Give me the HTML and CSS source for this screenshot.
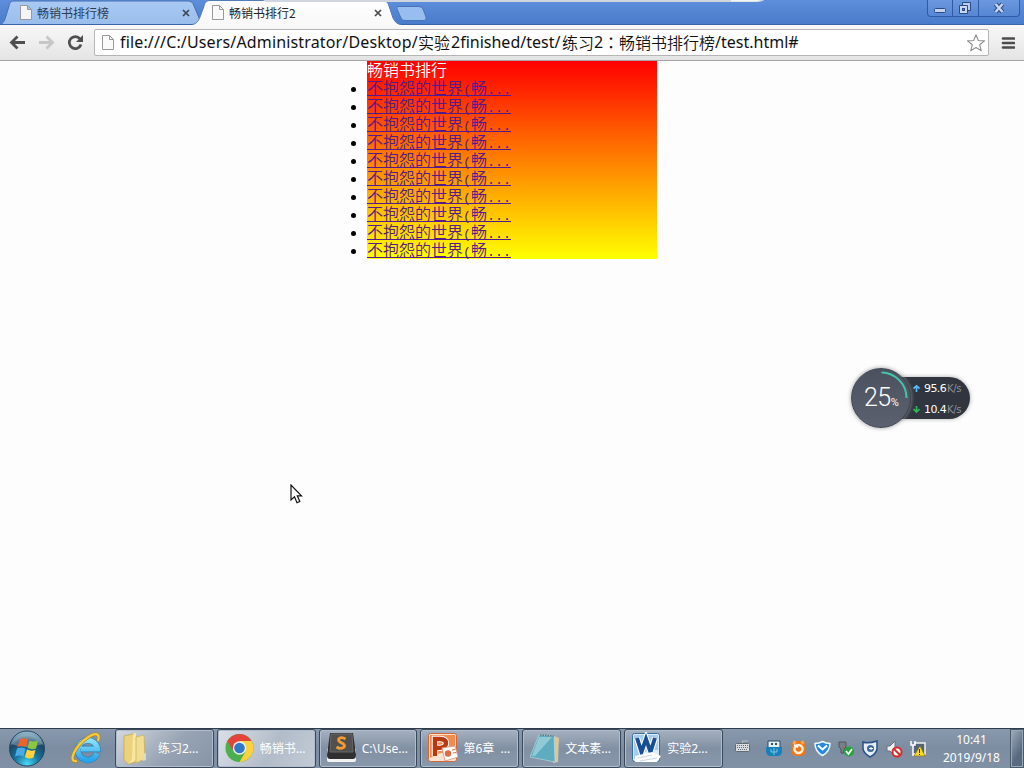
FILE: index.html
```html
<!DOCTYPE html>
<html lang="zh-CN">
<head>
<meta charset="utf-8">
<title>畅销书排行2</title>
<link rel="stylesheet" href="styles.css">
</head>
<body>
<div class="screen">
  <header class="tabstrip">
    <svg class="tab-shapes" width="1024" height="25" viewBox="0 0 1024 25">
      <defs>
        <linearGradient id="gTab" x2="0" y2="1"><stop offset="0" stop-color="#a9c9f3"/><stop offset="1" stop-color="#99bdec"/></linearGradient>
        <linearGradient id="gActive" x2="0" y2="1"><stop offset="0" stop-color="#fff"/><stop offset="1" stop-color="#f8f8f8"/></linearGradient>
      </defs>
      <path d="M-4 25C3 25 4 22 6 16L9 6C10 2 11 1 15 1H187C192 1 193 3 194 6L202 25Z" fill="url(#gTab)" stroke="#4671b3"/>
      <path d="M0 24.5H1024" stroke="#3c64a4"/>
      <path d="M192 25C196 24 198 22 200 17L204 6C205 2 207 .5 210 .5H382C387 .5 388 3 389 6L393 18C395 22 397 24 401 25Z" fill="url(#gActive)"/>
      <path d="M192 24.500C196 24 198 22 200 17L204 6C205 2 207 .5 210 .5H382C387 .5 388 3 389 6L393 18C395 22 397 24 401 24.500" fill="none" stroke="#527bb8"/>
      <path d="M398 6.500H419Q422 6.500 423 9L426 17Q427 20.500 424 20.500H405Q402 20.500 401 18L397 9Q396 6.500 398 6.500Z" fill="#98bef0" stroke="#4773b8"/>
      <path d="M263 0H764Q762 2 756 2H266Z" fill="#cfd6de"/><path d="M731 0H761L756 1.500H731Z" fill="#f3f6f4"/>
    </svg>
    <div class="tab tab-first">
      <svg width="12" height="15" viewBox="0 0 12 15"><path d="M.5.5H7.500L11.500 4.500V14.500H.5ZM7.500.5V4.500H11.500" fill="#f5f5f5" stroke="#999"/></svg>
      <span class="tab-title">畅销书排行榜</span>
      <svg class="tab-close" width="8" height="8" viewBox="0 0 8 8"><path d="M1 1L7 7M7 1L1 7" stroke="#3f4650" stroke-width="1.700"/></svg>
    </div>
    <div class="tab tab-second">
      <svg width="12" height="15" viewBox="0 0 12 15"><path d="M.5.5H7.500L11.500 4.500V14.500H.5ZM7.500.5V4.500H11.500" fill="#fafafa" stroke="#999"/></svg>
      <span class="tab-title">畅销书排行2</span>
      <svg class="tab-close" width="8" height="8" viewBox="0 0 8 8"><path d="M1 1L7 7M7 1L1 7" stroke="#4a4a4a" stroke-width="1.700"/></svg>
    </div>
    <div class="window-controls">
      <span class="wc"><svg width="24" height="16"><rect x="6.500" y="8.500" width="11" height="4" rx="1" fill="#c3d3ec" stroke="#2b4b86"/></svg></span>
      <span class="wc"><svg width="25" height="16"><path d="M9.500 2.500H17.500V10.500H9.500Z" fill="#b9cceb" stroke="#2b4b86"/><path d="M6.500 5.500H14.500V13.500H6.500Z" fill="#c9d8ef" stroke="#2b4b86"/><rect x="9.500" y="8.500" width="2" height="2" fill="#5c87cc" stroke="#2b4b86"/></svg></span>
      <span class="wc wc-close"><svg width="40" height="16"><path d="M16.500 4L23.500 12M23.500 4L16.500 12" stroke="#2b4b86" stroke-width="4.400"/><path d="M16.500 4L23.500 12M23.500 4L16.500 12" stroke="#c9d8ef" stroke-width="2.400"/></svg></span>
    </div>
  </header>

  <nav class="toolbar">
    <svg class="nav-icons" width="94" height="35" viewBox="0 0 94 35">
      <path d="M25 17.500H12M17.500 11.500L11.500 17.500L17.500 23.500" fill="none" stroke="#4f4f4f" stroke-width="2.800"/>
      <path d="M39 17.500H52M46.500 11.500L52.500 17.500L46.500 23.500" fill="none" stroke="#c7c7c7" stroke-width="2.800"/>
      <path d="M80 13.800A6 6 0 1 0 81 19.500" fill="none" stroke="#4f4f4f" stroke-width="2.700"/><path d="M83 10V17H76Z" fill="#4f4f4f"/>
    </svg>
    <div class="omnibox">
      <svg width="12" height="15" viewBox="0 0 12 15"><path d="M.5.5H7.500L11.500 4.500V14.500H.5ZM7.500.5V4.500H11.500" fill="#fafafa" stroke="#999"/></svg>
      <div class="url"><span class="url-drive">file:///C:/Users/Administrator/Desktop/</span><span class="url-cjk url-exp">实验</span><span class="url-folder">2finished/test/</span><span class="url-cjk">练习</span><span class="url-num">2</span><span class="url-colon">：</span><span class="url-cjk">畅销书排行榜</span><span class="url-file">/test.html#</span></div>
      <svg class="star" width="20" height="20" viewBox="0 0 20 20"><path d="M10 1.800L12.300 7.500L18.500 7.900L13.700 11.800L15.300 17.800L10 14.500L4.700 17.800L6.300 11.800L1.500 7.900L7.700 7.500Z" fill="#fff" stroke="#8f8f8f" stroke-width="1.100" stroke-linejoin="round"/></svg>
    </div>
    <svg class="menu" width="14" height="14" viewBox="0 0 14 14"><path d="M2 2.500H13M2 7H13M2 11.500H13" stroke="#4c4c4c" stroke-width="2.600" stroke-linecap="round"/></svg>
  </nav>

  <main class="page">
    <section class="books">
      <div class="books-title">畅销书排行</div>
      <ul class="book-list">
        <li><a href="#">不抱怨的世界<span class="mono">(</span>畅<span class="mono">...</span></a></li>
        <li><a href="#">不抱怨的世界<span class="mono">(</span>畅<span class="mono">...</span></a></li>
        <li><a href="#">不抱怨的世界<span class="mono">(</span>畅<span class="mono">...</span></a></li>
        <li><a href="#">不抱怨的世界<span class="mono">(</span>畅<span class="mono">...</span></a></li>
        <li><a href="#">不抱怨的世界<span class="mono">(</span>畅<span class="mono">...</span></a></li>
        <li><a href="#">不抱怨的世界<span class="mono">(</span>畅<span class="mono">...</span></a></li>
        <li><a href="#">不抱怨的世界<span class="mono">(</span>畅<span class="mono">...</span></a></li>
        <li><a href="#">不抱怨的世界<span class="mono">(</span>畅<span class="mono">...</span></a></li>
        <li><a href="#">不抱怨的世界<span class="mono">(</span>畅<span class="mono">...</span></a></li>
        <li><a href="#">不抱怨的世界<span class="mono">(</span>畅<span class="mono">...</span></a></li>
      </ul>
    </section>
  </main>

  <footer class="taskbar">
    <svg class="start" width="115" height="39" viewBox="0 0 115 39">
      <defs>
        <radialGradient id="orb" cx=".5" cy=".95" r=".9"><stop offset="0" stop-color="#48dcf5"/><stop offset=".4" stop-color="#17749f"/><stop offset=".75" stop-color="#1c4767"/><stop offset="1" stop-color="#8db5ca"/></radialGradient>
        <linearGradient id="ie" x2="0" y2="1"><stop offset="0" stop-color="#8be0fd"/><stop offset="1" stop-color="#2ba3e8"/></linearGradient>
      </defs>
      <circle cx="27" cy="19.500" r="17.500" fill="url(#orb)" stroke="#27465e"/>
      <path d="M11 15A17 15 0 0 1 43 15Q27 21 11 15Z" fill="#d3e5ef" opacity=".3"/>
      <path d="M20 10.500Q24 8 28 10.500L26 18.200Q22 16 17.500 18Z" fill="#ef632a"/>
      <path d="M29.500 11.500Q33.500 13.500 38 11.500L36 19.500Q31.500 21 27.500 19Z" fill="#8dc63f"/>
      <path d="M17 19.500Q21.500 17.500 25.500 19.800L23.500 27.500Q19.500 25.500 15 27.500Z" fill="#4aa9e9"/>
      <path d="M27 20.500Q31 22.500 35.500 21L33.500 28.500Q28.500 30.500 24.900 28Z" fill="#ffd13b"/>
      <path d="M97 24.500A9.800 9.800 0 1 1 97.500 20H81" fill="none" stroke="#297eb9" stroke-width="6.400"/>
      <path d="M97 24.500A9.800 9.800 0 1 1 97.500 20H81" fill="none" stroke="url(#ie)" stroke-width="5.200"/>
      <path d="M77 32C67 34 75 17 87 9C94 4 101 3 98 12" fill="none" stroke="#a98121" stroke-width="3.400"/><path d="M77 32C67 34 75 17 87 9C94 4 101 3 98 12" fill="none" stroke="#f6cb3a" stroke-width="2.300"/>
    </svg>
    <div class="tasks">
      <div class="task task-folder">
        <svg width="30" height="34" viewBox="0 0 30 34"><path d="M1 4L10 2L14 6V30L5 32L1 28Z" fill="#ecd27a" stroke="#c3a552" stroke-width=".7"/><path d="M10 2L13 1V28L5 32L9 27Z" fill="#f9e7a0"/><path d="M13 5L21 3L22 27L13 31Z" fill="#f2de92" stroke="#c9ac58" stroke-width=".7"/><path d="M20 22L23 21V28L20 29Z" fill="#d8dfbd"/></svg>
        <span>练习2...</span></div>
      <div class="task task-active">
        <svg width="30" height="34" viewBox="0 0 30 34"><circle cx="14.500" cy="16" r="14" fill="#4cae4d"/><path d="M14.500 16L2.400 9A14 14 0 0 1 26.600 9Z" fill="#e4443a"/><path d="M14.500 9H26.600A14 14 0 0 1 14.500 30L20.600 19.500Z" fill="#fbd13d"/><path d="M2.400 9L8.500 19.500L14.500 16V9Z" fill="#e4443a"/><circle cx="14.500" cy="16" r="6.700" fill="#f0f4f7"/><circle cx="14.500" cy="16" r="5.300" fill="#2f79c7"/></svg>
        <span>畅销书...</span></div>
      <div class="task">
        <svg width="30" height="34" viewBox="0 0 30 34"><rect x="0" y="16" width="29" height="14" rx="2" fill="#f3f3f3"/><path d="M3 1H26L29 23Q29 27 26 27H3Q0 27 0 23Z" fill="#303030"/><path d="M4 2H25L26 20H3Z" fill="#505050" stroke="#686868"/><path d="M18.500 7C14 4 9 7 13 10L16.500 12C20 15 14 18 9.500 15" fill="none" stroke="#f69a32" stroke-width="2.800"/></svg>
        <span>C:\Use...</span></div>
      <div class="task">
        <svg width="30" height="34" viewBox="0 0 30 34"><rect x=".5" y="1.500" width="28" height="28" rx="2" fill="#fae2cf" stroke="#cf6738"/><path d="M2 3H27V21Q14 18 2 26Z" fill="#f18c4c"/><path d="M7 24V7H12Q18 7 18 11.500Q18 16 9 16" fill="none" stroke="#fff" stroke-width="6.400"/><path d="M7 24V7H12Q18 7 18 11.500Q18 16 9 16" fill="none" stroke="#b9380d" stroke-width="4.400"/><path d="M14 16L27 14L30 25L17 29Z" fill="#fff" stroke="#dca38d"/><circle cx="20" cy="21.500" r="3.200" fill="#da6b49"/><path d="M24 18L27 17.500M25 21L28 20.500" stroke="#d86b38"/></svg>
        <span>第6章&nbsp; ...</span></div>
      <div class="task">
        <svg width="30" height="34" viewBox="0 0 30 34"><path d="M22 3L29 6L28 30L23 31Z" fill="#d9c89a"/><path d="M9 3L24 4L25 30L0 25Z" fill="#5dacbf" stroke="#b7d9df" stroke-width=".7"/><path d="M9 5L22 5L5 24L2 24Z" fill="#bce4e8" opacity=".55"/><path d="M10 3L24 4" stroke="#4f7c84" stroke-width="1.500" stroke-dasharray="1.500 1"/></svg>
        <span>文本素...</span></div>
      <div class="task">
        <svg width="30" height="34" viewBox="0 0 30 34"><rect x=".5" y="1.500" width="27" height="28" rx="2" fill="#dcebf7" stroke="#356ca9"/><path d="M2 3H26V18Q12 17 2 27Z" fill="#a5cdeb"/><path d="M5 6L9.500 20L14 7L18.500 20L23 6" fill="none" stroke="#fff" stroke-width="6"/><path d="M5 6L9.500 20L14 7L18.500 20L23 6" fill="none" stroke="#174f94" stroke-width="4"/><path d="M3 24L20 20L29 24L25 30H3Z" fill="#fff"/><path d="M6 26L20 23M8 29L25 26" stroke="#b8c8dc" stroke-width=".8"/></svg>
        <span>实验2...</span></div>
    </div>
    <svg class="tray" width="198" height="39" viewBox="0 0 198 39">
      <g transform="translate(0 1)">
      <g transform="translate(-1 0)"><rect x="9.500" y="13.500" width="14" height="8" rx="1" fill="#d9dde0" stroke="#626a72"/><path d="M11 15.500H22M11 17.500H22M12 19.500H21" stroke="#656b70" stroke-dasharray="1 1"/><path d="M16.500 13V11H22" fill="none" stroke="#b4bdc6"/></g>
      <g transform="translate(-2 0)"><path d="M43 11H55V18H43Z" fill="#e4eff4" stroke="#284b64"/><path d="M46 13H48V15H46ZM50 13H52V15H50Z" fill="#305064"/><path d="M41 17H57V21Q57 26 52 26H46Q41 26 41 21Z" fill="#1780b9"/><path d="M49 18V25M46 19V22H49M52 19V22H49" fill="none" stroke="#7cc4e2"/></g>
      <g transform="translate(-3 0)"><rect x="67" y="11" width="15" height="15" rx="5" fill="#ec761c"/><path d="M69 12L72 13M80 12L77 13" stroke="#f9a94d" stroke-width="3"/><circle cx="74.500" cy="19" r="4" fill="none" stroke="#fff1d4" stroke-width="2.500"/><path d="M70 15L74 17" stroke="#fff" stroke-width="2"/></g>
      <g transform="translate(-3 -.500)"><path d="M91 14Q95 14 98.500 12Q102 14 106 14Q106 22 98.500 26Q91 22 91 14Z" fill="#278ae0" stroke="#eef7ff" stroke-width="1.500"/><path d="M94 16L98.500 20L103 16" fill="none" stroke="#fff" stroke-width="2"/></g>
      <g transform="translate(-3 0)"><path d="M115 12H122V17L120 19V23H117V19L115 17Z" fill="#777f87" stroke="#555"/><circle cx="125" cy="21.500" r="5" fill="#22a438"/><path d="M122 21L124.500 24L128 19" fill="none" stroke="#fff" stroke-width="1.700"/></g>
      <g transform="translate(-3 0)"><path d="M139 12Q144 14 153 11V19Q152 24 146 27Q139 23 139 18Z" fill="#e6edf5" stroke="#285189" stroke-width="1.500"/><circle cx="146.500" cy="18.500" r="3.500" fill="#3b68a2"/><path d="M145 18.500H149M147 17V20" stroke="#fff"/></g>
      <g transform="translate(-3 0)"><path d="M163 16H166L171 11V26L166 21H163Z" fill="#f1f1f1" stroke="#68717c"/><circle cx="173" cy="22" r="4.500" fill="#fff" stroke="#d52c2c" stroke-width="2"/><path d="M170 19L176 25" stroke="#d52c2c" stroke-width="2"/></g>
      <g transform="translate(-4 0)"><path d="M191 13H202V24H190" fill="#526578" stroke="#f2f2f2" stroke-width="1.500"/><path d="M188 11V15H192V11M190 15V26" fill="none" stroke="#fff" stroke-width="1.500"/><path d="M197 16L202 26H191Z" fill="#ffdb26" stroke="#8b7513" stroke-width=".7"/><path d="M196.500 19V23M196.500 24V25" stroke="#222"/></g>
      </g>
    </svg>
    <div class="clock"><span>10:41</span><span>2019/9/18</span></div>
    <div class="show-desktop"></div>
  </footer>

  <aside class="meter">
    <div class="speed">
      <div class="speed-row"><svg width="7" height="8"><path d="M3.500 7V1M.5 3.500L3.500 .8L6.500 3.500" fill="none" stroke="#58b8f4" stroke-width="1.700"/></svg><b>95.6</b><i>K/s</i></div>
      <div class="speed-row"><svg width="7" height="8"><path d="M3.500 0V6M.5 3L3.500 6L6.500 3" fill="none" stroke="#31b856" stroke-width="1.700"/></svg><b>10.4</b><i>K/s</i></div>
    </div>
    <div class="dial">
      <svg class="arc" width="60" height="60"><path d="M30.500 4.500A25.500 25.500 0 0 1 55.500 30" fill="none" stroke="#43c5ad" stroke-width="2"/></svg>
      <span class="percent">25</span><span class="sign">%</span>
    </div>
  </aside>
  <svg class="cursor" width="13" height="21" viewBox="0 0 13 21"><path d="M1 1V16L4.500 12.800L7 18.700L9.800 17.500L7.300 11.800H11.500Z" fill="#fff" stroke="#111" stroke-width="1.200"/></svg>
</div>
</body>
</html>
```
FILE: styles.css
```css
* { box-sizing: border-box; }
body { margin: 0; background: #fdfdfd; overflow: hidden; font-family: "Noto Sans", "Noto Sans CJK SC", sans-serif; }
svg { display: block; flex: none; }
.screen { position: relative; width: 1024px; height: 768px; display: flex; flex-direction: column; }

.tabstrip { position: relative; height: 25px; display: flex; background: linear-gradient(#5e8edb, #487bcb); flex: none; }
.tab-shapes { position: absolute; left: 0; top: 0; }
.tab { position: relative; display: flex; align-items: center; height: 25px; font: 12px/24px "Noto Sans CJK SC", sans-serif; }
.tab-first { width: 198px; padding: 0 8px 0 20px; color: #2c3b50; }
.tab-second { width: 192px; padding: 0 8px 0 14px; color: #222; }
.tab-title { margin-left: 5px; flex: 1; }
.window-controls { position: relative; display: flex; margin-left: auto; margin-right: 4px; width: 93px; height: 17px; border: 1px solid #2d5ba8; border-top: 0; border-radius: 0 0 4px 4px; background: linear-gradient(#6b98df, #5787d3); overflow: hidden; }
.wc + .wc { border-left: 1px solid #2d5ba8; }

.toolbar { height: 36px; flex: none; display: flex; align-items: center; background: linear-gradient(#f8f8f8, #e4e4e4); border-bottom: 1px solid #a5a5a5; }
.omnibox { width: 895px; height: 27px; display: flex; align-items: center; padding-left: 7px; background: #fff; border: 1px solid #b5b5b5; border-radius: 2px; }
.url { display: flex; align-items: center; margin-left: 6px; height: 25px; padding-bottom: 1px; color: #111; white-space: nowrap; flex: 1; font: 16px/24px "Noto Sans", sans-serif; }
.url span { flex: none; }
.url-drive { width: 298px; letter-spacing: .15px; }
.url-cjk { font-family: "Noto Sans CJK SC", sans-serif; font-weight: 350; }
.url-exp { width: 33px; }
.url-folder { width: 111px; }
.url-num { width: 9px; }
.url-colon { width: 16px; font-family: "Noto Sans CJK TC", sans-serif; }
.url-file { width: 83px; }
.star { margin-right: 2px; }
.menu { margin-left: 12px; }

.page { flex: 1; min-height: 0; }
.books { width: 290px; margin-left: 367px; height: 198px; background: linear-gradient(#f00, #ff0); font: 350 16px/18px "Noto Sans CJK SC", sans-serif; }
.books-title { height: 18px; line-height: 16px; color: #fff; }
.book-list { margin: 0; padding: 0; list-style: none; }
.book-list li { height: 18px; display: flex; align-items: center; margin-left: -16px; }
.book-list li::before { content: ""; width: 5px; height: 5px; border-radius: 50%; background: #000; margin-right: 11px; margin-top: 2px; }
.book-list a { display: flex; align-items: baseline; width: 144px; height: 16px; line-height: 14px; color: #551a8b; text-decoration: none; border-bottom: 1px solid #551a8b; white-space: nowrap; }
.mono { font: 13.33px/14px "Liberation Mono", monospace; }

.taskbar { height: 40px; flex: none; display: flex; background: linear-gradient(#8999ad, #7c8da2 50%, #8191a5); border-top: 1px solid #303c4b; color: #fff; }
.tasks { display: flex; flex: none; gap: 3px; width: 608px; }
.task { flex: 1; min-width: 0; height: 39px; display: flex; align-items: center; padding-left: 7px; gap: 5px; border: 1px solid #39495b; border-radius: 3px; background: linear-gradient(#a5b1c0, #8190a3 50%, #8999ab); box-shadow: inset 0 0 0 1px #b2bdcb; font: 12px/18px "Noto Sans", "Noto Sans CJK SC", sans-serif; white-space: nowrap; }
.task-folder { background: linear-gradient(135deg, #d3d9e0, #98a4b4 55%, #8594a7); }
.task-active { background: linear-gradient(120deg, #dbe0e6, #b2bcc9 55%, #c2cbd5); }
.tray { overflow: visible; margin-left: 4px; }
.clock { width: 85px; flex: none; display: flex; flex-direction: column; align-items: center; padding: 2px 0 0 8px; font: 12px/18px "Noto Sans", sans-serif; }
.show-desktop { width: 14px; flex: none; border: 1px solid #4a5a6d; box-shadow: inset 0 0 0 1px #9aa7b7; background: linear-gradient(120deg, #a1adbb, #586a80 65%); }

.meter { position: absolute; left: 851px; top: 368px; width: 119px; height: 60px; }
.speed { position: absolute; left: 31px; top: 9px; width: 88px; height: 42px; border-radius: 0 21px 21px 0; background: #303540; padding: 1px 0 0 31px; box-shadow: 0 0 4px #aaa; }
.speed-row { height: 21px; display: flex; align-items: center; color: #fff; font: 11px/20px "DejaVu Sans", sans-serif; letter-spacing: -.6px; }
.speed-row b { font-weight: 400; margin-left: 4px; width: 23px; }
.speed-row i { font-style: normal; font-size: 10px; color: #8c919b; letter-spacing: -.3px; }
.dial { position: absolute; left: 0; top: 0; width: 60px; height: 60px; border-radius: 50%; background: linear-gradient(#4b515e, #5b616e); border: 1px solid #414752; box-shadow: 0 0 4px #999; display: flex; align-items: baseline; padding: 11px 0 0 12px; color: #fff; }
.arc { position: absolute; left: -1px; top: -1px; }
.percent { font: 300 25px/36px Roboto, sans-serif; letter-spacing: -.5px; }
.sign { font: 11px/12px Roboto, sans-serif; }
.cursor { position: absolute; left: 290px; top: 484px; }
```
